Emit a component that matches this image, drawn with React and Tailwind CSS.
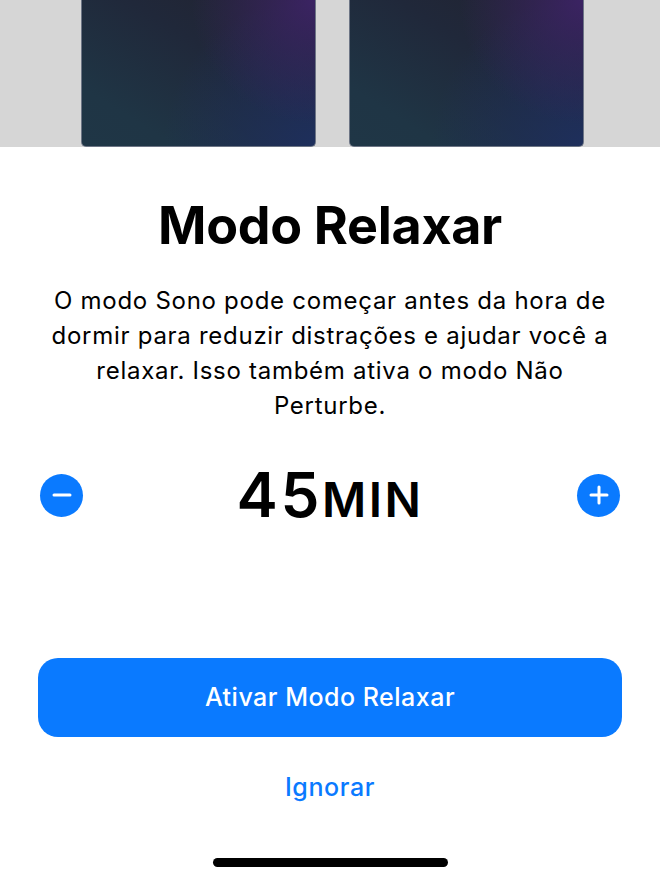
import React from "react";

function Card() {
  return (
    <div className="relative h-full w-[235px] overflow-hidden rounded-b-[5px] border-x border-b border-[#6d7585] bg-[radial-gradient(circle_at_100%_0%,#3b2363_0%,rgba(59,35,99,0)_45%),radial-gradient(circle_at_100%_100%,#1e2f5c_0%,rgba(30,47,92,0)_55%),linear-gradient(to_bottom_left,#22222f_0%,#20283a_40%,#1f3545_80%,#1f3646_100%)]" />
  );
}

export default function App() {
  return (
    <div
      className="flex h-[880px] w-[660px] flex-col overflow-hidden bg-white text-black"
      style={{ fontFamily: "Inter, 'Noto Sans', sans-serif" }}
    >
      <div className="flex h-[147px] shrink-0 gap-[33px] bg-[#d6d6d6] pl-[81px]">
        <Card />
        <Card />
      </div>

      <h1 className="mt-[49px] text-center text-[52px] font-bold leading-[60px] tracking-[-0.3px]">
        Modo Relaxar
      </h1>

      <p className="mt-[27px] px-[10px] text-center text-[24px] leading-[35px] tracking-[0.72px]">
        O modo Sono pode começar antes da hora de
        <br />
        dormir para reduzir distrações e ajudar você a
        <br />
        relaxar. Isso também ativa o modo Não
        <br />
        Perturbe.
      </p>

      <div className="mt-[41px] flex h-[62px] items-center justify-between px-[40px]">
        <button className="flex h-[43px] w-[43px] items-center justify-center rounded-full bg-[#0a7aff]">
          <svg width="20" height="4" viewBox="0 0 20 4">
            <line x1="2" y1="2" x2="18" y2="2" stroke="white" strokeWidth="3" strokeLinecap="round" />
          </svg>
        </button>
        <div className="flex items-baseline font-semibold leading-none tracking-[2.5px]">
          <span className="text-[62px]">45</span>
          <span className="text-[48px]">MIN</span>
        </div>
        <button className="flex h-[43px] w-[43px] items-center justify-center rounded-full bg-[#0a7aff]">
          <svg width="20" height="20" viewBox="0 0 20 20">
            <line x1="2" y1="10" x2="18" y2="10" stroke="white" strokeWidth="3" strokeLinecap="round" />
            <line x1="10" y1="2" x2="10" y2="18" stroke="white" strokeWidth="3" strokeLinecap="round" />
          </svg>
        </button>
      </div>

      <div className="mt-[132px] px-[38px]">
        <button className="flex h-[79px] w-full items-center justify-center rounded-[20px] bg-[#0a7aff] text-[25px] font-medium tracking-[0.5px] text-white">
          Ativar Modo Relaxar
        </button>
      </div>

      <div className="mt-[35px] text-center text-[25px] font-medium leading-[30px] tracking-[0.6px] text-[#0a7aff]">
        Ignorar
      </div>

      <div className="mt-[56px] flex justify-center">
        <div className="h-[9px] w-[235px] rounded-full bg-black" />
      </div>
    </div>
  );
}
